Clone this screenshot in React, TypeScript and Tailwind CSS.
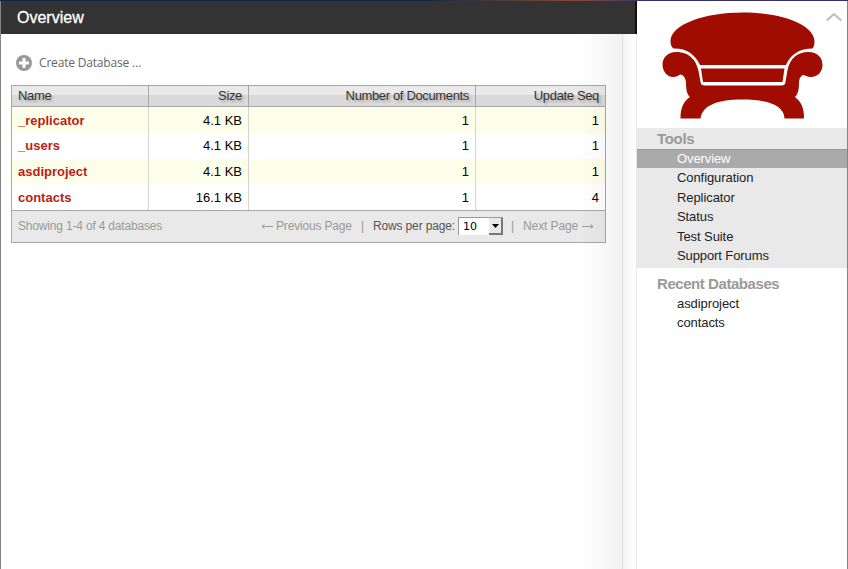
const databases = [
  { name: "_replicator", size: "4.1 KB", docs: 1, seq: 1, height: "h-[26px] pt-[2px]" },
  { name: "_users", size: "4.1 KB", docs: 1, seq: 1, height: "h-[26px]" },
  { name: "asdiproject", size: "4.1 KB", docs: 1, seq: 1, height: "h-[25px]" },
  { name: "contacts", size: "16.1 KB", docs: 1, seq: 4, height: "h-[26px] pt-[2px]" },
];

const columns = "grid grid-cols-[137px_100px_227px_129px]";
const headCell = "border-r border-[#a7a7a7] px-[6px] last:border-r-0";
const cell = "flex items-center justify-end border-r border-[#d3d3d3] px-[6px] last:border-r-0";

function Couch() {
  return (
    <svg width="162" height="108" viewBox="0 0 162 108" fill="#a00d00" className="block">
      <path d="M11.500 36.500 C10 35.500 8.500 33 8.500 29.500 C8.500 12.500 42 .5 80.500 .5 C119 .5 152.500 12.500 152.500 29.500 C152.500 33 151.500 35.500 150.500 36.500 C138 36.500 128.500 42 124 53 L38 53 C33 42 24 36 11.500 36.500 Z" />
      <path d="M39 56.500 H122.500 L120.500 70 H41 Z" />
      <path d="M14 40 C29 40 34.500 50 36.500 59 L38.500 70 Q39 73.500 42.500 73.500 H119.500 Q123 73.500 123.500 70 L125.500 58 C128 46 136 40 146 40 C156 40 160.500 46 160.500 53 C160.500 60 155.500 65 149 65 C145 65 142.500 63 141.500 63 C139.500 63 137 66 137 71 C137 79 135.500 82.500 133 85 C139 90 142 95 142 106.500 H122.500 C122 93 105 87.500 80.500 87.500 C56 87.500 40.500 93 38.500 106.500 H18.500 C18.500 95 22 89 28 85 C25.500 83 24 79 24 71 C24 66 21 63 18.500 62.500 C17 63 15 65 11 65 C5 65 .5 59 .5 52.500 C.5 45 6.500 40 14 40 Z" />
    </svg>
  );
}

function DatabaseTable() {
  return (
    <section className="h-[158px] w-[595px] border border-[#a7a7a7] text-[13px]">
      <header className={`${columns} h-[21px] border-b border-[#a7a7a7] bg-linear-to-b from-[#e9e9e9] from-45% to-[#d9d9d9] to-45% text-right leading-[20px] tracking-[-0.35px] text-[#333] [text-shadow:2px_2px_2px_#aaa]`}>
        <span className={`${headCell} text-left`}>Name</span>
        <span className={headCell}>Size</span>
        <span className={headCell}>Number of Documents</span>
        <span className={headCell}>Update Seq</span>
      </header>
      {databases.map((db) => (
        <div key={db.name} className="odd:bg-white even:bg-[#feffea]">
          <div className={`${columns} ${db.height.split(" ")[0]}`}>
            {[db.name, db.size, db.docs, db.seq].map((value, i) => (
              <span key={i} className={`${cell} ${db.height.split(" ")[1] ?? ""} ${i === 0 ? "justify-start! font-bold text-[#ba1e16]" : ""}`}>
                {value}
              </span>
            ))}
          </div>
        </div>
      ))}
      <footer className="flex h-[32px] items-center border-t border-[#a7a7a7] bg-[#e9e9e9] pb-px pl-[6px] text-[12px] whitespace-nowrap text-[#999]">
        <span className="w-[243px] tracking-[-0.18px]">Showing 1-4 of 4 databases</span>
        <svg width="12" height="7" viewBox="0 0 12 7" fill="none" stroke="currentColor"><path d="M12 3.500H1M3.500 1.500L1 3.500 3.500 5.500" /></svg>
        <span className="ml-[3px] w-[76px] tracking-[-0.18px]">Previous Page</span>
        <span className="ml-[9px] w-[3px]">|</span>
        <span className="ml-[9px] w-[81px] tracking-[-0.15px] text-[#555]">Rows per page:</span>
        <div className="ml-1 flex h-[18px] w-[45px] shrink-0 justify-between border-t border-l border-[#999] bg-white pl-[4px] font-['DejaVu_Sans',sans-serif] text-[11px] leading-[17px] text-black">
          10
          <span className="flex h-[17px] w-[14px] items-center justify-center border-r-2 border-b-2 border-[#777] bg-[#e9e9e9]">
            <svg width="7" height="4"><path d="M0 0H7L3.500 4Z" /></svg>
          </span>
        </div>
        <span className="ml-[8px] w-[3px]">|</span>
        <span className="ml-[9px] w-[56px] tracking-[-0.1px]">Next Page</span>
        <svg className="ml-[3px]" width="12" height="7" viewBox="0 0 12 7" fill="none" stroke="currentColor"><path d="M0 3.500H11M8.500 1.500L11 3.500 8.500 5.500" /></svg>
      </footer>
    </section>
  );
}

function Sidebar() {
  return (
    <aside className="w-[210px] bg-white text-[13px] text-[#222]">
      <div className="flex h-[127px] items-start pt-[11px] pl-[25px]">
        <Couch />
        <svg className="ml-[2px]" width="16" height="10" fill="none" stroke="#bbb" strokeWidth="2"><path d="M.7 8.500L8 2L15.300 8.500" /></svg>
      </div>
      <nav className="h-[140px] bg-[#e9e9e9]">
        <h2 className="h-[21px] pl-[20px] text-[15px] leading-[22px] font-bold tracking-[-0.3px] text-[#999]">Tools</h2>
        <ul>
          <li className="h-[19px] border-t border-[#999] bg-[#aaa] pl-[40px] leading-[17px] tracking-[-0.1px] text-white">Overview</li>
          <li className="h-[19px] pl-[40px] leading-[19px] tracking-[-0.08px]">Configuration</li>
          <li className="h-[20px] pl-[40px] leading-[21px] tracking-[-0.08px]">Replicator</li>
          <li className="h-[19px] pl-[40px] leading-[19px] tracking-[-0.08px]">Status</li>
          <li className="h-[20px] pl-[40px] leading-[21px] tracking-[-0.08px]">Test Suite</li>
          <li className="h-[19px] pl-[40px] leading-[19px] tracking-[-0.1px]">Support Forums</li>
        </ul>
      </nav>
      <nav className="pt-[5px]">
        <h2 className="h-[21px] pl-[20px] text-[15px] leading-[22px] font-bold tracking-[-0.44px] text-[#999]">Recent Databases</h2>
        <ul className="pl-[40px] leading-[19px] tracking-[-0.08px]">
          <li>asdiproject</li>
          <li>contacts</li>
        </ul>
      </nav>
    </aside>
  );
}

export default function App() {
  return (
    <div className="flex h-[569px] w-[848px] flex-col overflow-hidden font-['Liberation_Sans',Arial,sans-serif] text-black">
      <div className="h-px shrink-0 bg-linear-to-r from-[#122544] from-50% via-[#8b482e] via-68% to-[#36306c] to-76%" />
      <div className="flex h-[568px] border-x border-[#858585]">
        <main className="w-[636px] bg-white">
          <h1 className="h-[33px] border-r-2 border-r-[#111] bg-[#333] pl-[16px] text-[16px] leading-[33px] text-white [-webkit-text-stroke:0.3px_white]">Overview</h1>
          <div className="flex h-[535px] justify-between">
            <div className="pl-[10px]">
              <div className="flex h-[51px] items-center pt-[6px] pl-[5px] font-['Open_Sans','Noto_Sans',sans-serif] text-[12px] tracking-[-0.18px] text-[#666]">
                <svg width="16" height="16" className="mr-[7px]"><circle cx="8" cy="8" r="8" fill="#999" /><path d="M8 3V13M3 8H13" stroke="white" strokeWidth="3" /></svg>
                Create Database …
              </div>
              <DatabaseTable />
            </div>
            <div className="-ml-[27px] flex h-full w-[58px]">
              <div className="w-[44px] border-r border-[#dedede] bg-linear-to-r from-transparent to-black/5" />
              <div className="flex-1 border-r border-[#e8e8e8] bg-linear-to-r from-[#f3f3f3] to-white" />
            </div>
          </div>
        </main>
        <Sidebar />
      </div>
    </div>
  );
}
